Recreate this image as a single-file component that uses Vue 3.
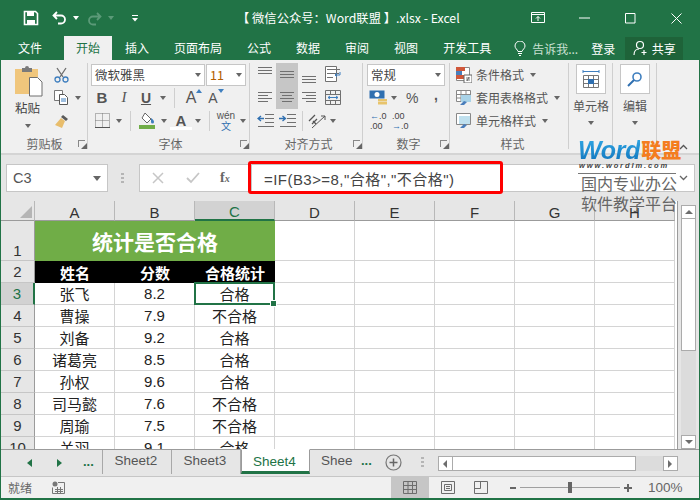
<script setup>
const tabs = ['插入', '页面布局', '公式', '数据', '审阅', '视图', '开发工具']
const cols = ['A', 'B', 'C', 'D', 'E', 'F', 'G', 'H']
const people = [
  { row: 3, name: '张飞', score: '8.2', res: '合格' },
  { row: 4, name: '曹操', score: '7.9', res: '不合格' },
  { row: 5, name: '刘备', score: '9.2', res: '合格' },
  { row: 6, name: '诸葛亮', score: '8.5', res: '合格' },
  { row: 7, name: '孙权', score: '9.6', res: '合格' },
  { row: 8, name: '司马懿', score: '7.6', res: '不合格' },
  { row: 9, name: '周瑜', score: '7.5', res: '不合格' },
  { row: 10, name: '关羽', score: '9.1', res: '合格' }
]
// 对齐按钮的线条
const alignTop = [
  { d: 'M4 4.5h14M4 7.5h14M4 10.5h14', on: false },
  { d: 'M4 8.5h14M4 11.5h14M4 14.5h14', on: true },
  { d: 'M4 13.5h14M4 16.5h14M4 19.5h14', on: false }
]
const alignBottom = [
  { d: 'M4 6.5h14M4 9.5h10M4 12.5h14M4 15.5h10', on: false },
  { d: 'M4 6.5h14M6 9.5h10M4 12.5h14M6 15.5h10', on: true },
  { d: 'M4 6.5h14M8 9.5h10M4 12.5h14M8 15.5h10', on: false }
]
</script>

<template>
  <div class="window">
    <header class="titlebar">
      <div class="qat">
        <svg class="qat-save" width="16" height="16" viewBox="0 0 16 16"><path d="M1.5 1.5h11l2 2v11h-13z" fill="none" stroke="#fff" stroke-width="1.6"/><path d="M4 2h7v4H4zM4 10h8v5H4z" fill="#fff"/></svg>
        <svg class="qat-undo" width="16" height="14" viewBox="0 0 16 14"><path d="M5 1L1.5 4.5 5 8M2 4.5h7a4 4 0 0 1 0 8H6" fill="none" stroke="#fff" stroke-width="1.8"/></svg>
        <i class="caret white"></i>
        <svg class="qat-redo" width="16" height="14" viewBox="0 0 16 14"><path d="M11 1l3.5 3.5L11 8M14 4.5H7a4 4 0 0 0 0 8h3" fill="none" stroke="#5b9a78" stroke-width="1.8"/></svg>
        <i class="caret dim"></i>
        <svg class="qat-more" width="8" height="8" viewBox="0 0 8 8"><path d="M1 1.5h6" stroke="#fff"/><path d="M1 4h6L4 7.5z" fill="#fff"/></svg>
      </div>
      <div class="doc-title">【 微信公众号：Word联盟 】.xlsx - Excel</div>
      <div class="win-btns">
        <svg width="14" height="12" viewBox="0 0 14 12"><path d="M.5 .5h13v10H.5zM.5 2.5h13M7 9V4.5M5 6.5l2-2 2 2" fill="none" stroke="#fff"/></svg>
        <svg class="btn-min" width="11" height="2" viewBox="0 0 11 2"><path d="M0 1h11" stroke="#fff"/></svg>
        <svg class="btn-max" width="11" height="11" viewBox="0 0 11 11"><path d="M.5 .5h9.5v9.5H.5z" fill="none" stroke="#fff"/></svg>
        <svg class="btn-close" width="11" height="11" viewBox="0 0 11 11"><path d="M.5 .5l10 10M10.500 .5l-10 10" stroke="#fff"/></svg>
      </div>
    </header>

    <nav class="tabbar">
      <span class="tab file">文件</span>
      <span class="tab active">开始</span>
      <span v-for="t in tabs" :key="t" class="tab">{{ t }}</span>
      <svg class="bulb" width="12" height="15" viewBox="0 0 12 15"><path d="M4 10.500C3.500 8.500 1 7.500 1 5a5 5 0 0 1 10 0c0 2.500-2.500 3.500-3 5.500zM4 12.500h4M5 14.500h2" fill="none" stroke="#fff"/></svg>
      <span class="tell">告诉我...</span>
      <span class="login">登录</span>
      <span class="share">
        <svg width="16" height="16" viewBox="0 0 16 16"><circle cx="7" cy="5" r="3.500" fill="none" stroke="#fff" stroke-width="1.200"/><path d="M1 15c0-4 2.500-6 5-6M11 10v5M8.500 12.500h5" fill="none" stroke="#fff" stroke-width="1.200"/></svg>
        共享
      </span>
    </nav>

    <section class="ribbon">
      <!-- 剪贴板 -->
      <div class="group clip">
        <div class="group-body clip-body">
          <div class="paste">
            <svg width="29" height="31" viewBox="0 0 29 31"><path d="M1 3h23v25H1z" fill="#f0c67c"/><path d="M8 2h3a2 2 0 0 1 4 0h3v4H8z" fill="#7a7a7a"/><path d="M15.500 11.500h8l4.500 4.500v14h-12.500z" fill="#fff" stroke="#6e6e6e"/></svg>
            <span class="paste-txt">粘贴</span>
            <i class="caret"></i>
          </div>
          <div class="clip-tools">
            <div class="clip-row">
              <svg width="15" height="16" viewBox="0 0 15 16"><path d="M3 1l6 9M12 1L6 10" stroke="#6d6d6d" stroke-width="1.300"/><circle cx="3.500" cy="12.500" r="2.500" fill="none" stroke="#3f7fbf" stroke-width="1.300"/><circle cx="11.500" cy="12.500" r="2.500" fill="none" stroke="#3f7fbf" stroke-width="1.300"/></svg>
            </div>
            <div class="clip-row">
              <svg width="15" height="15" viewBox="0 0 15 15"><path d="M.5 .5h8v10h-8z" fill="#fff" stroke="#777"/><path d="M5.500 4.500h5l3 3v7h-8z" fill="#fff" stroke="#555"/><path d="M7 9h5M7 11h5" stroke="#3f7fbf"/></svg>
              <i class="caret"></i>
            </div>
            <div class="clip-row">
              <svg width="16" height="16" viewBox="0 0 16 16"><path d="M9 2l5 4-2 2-5-4z" fill="#5a5a5a"/><path d="M7 5l4 3-3 7-7-3z" fill="#e8bd6c"/></svg>
            </div>
          </div>
        </div>
        <div class="group-label">剪贴板<i class="launcher"></i></div>
      </div>

      <!-- 字体 -->
      <div class="group font">
        <div class="group-body">
          <div class="row selects">
            <div class="select font-name">微软雅黑<i class="caret"></i></div>
            <div class="select font-size">11<i class="caret"></i></div>
          </div>
          <div class="row font-row2">
            <span class="cell b">B</span>
            <span class="cell it">I</span>
            <span class="cell un">U</span>
            <span class="kc"><i class="caret"></i></span>
            <i class="sep"></i>
            <span class="cell big-a">A<i class="up"></i></span>
            <span class="cell small-a">A<i class="down"></i></span>
          </div>
          <div class="row font-row3">
            <span class="cell">
              <svg width="15" height="15" viewBox="0 0 15 15"><path d="M.5 .5h14v14H.5zM7.500 .5v14M.5 7.500h14" fill="none" stroke="#777" stroke-dasharray="1 1"/><path d="M0 14.500h15" stroke="#555"/></svg>
            </span>
            <span class="kc"><i class="caret"></i></span>
            <i class="sep"></i>
            <span class="cell">
              <svg width="17" height="17" viewBox="0 0 17 17"><path d="M6 1l6 6-4 4-5-5z" fill="#fff" stroke="#666"/><path d="M12 6c2 1 3 3 3 4a1.500 1.500 0 0 1-3 0z" fill="#3f7fbf"/><path d="M0 13h16v4H0z" fill="#70ad47"/></svg>
            </span>
            <span class="kc"><i class="caret"></i></span>
            <span class="cell color-a">A</span>
            <span class="kc"><i class="caret"></i></span>
            <i class="sep"></i>
            <span class="cell wen"><b>wén</b><em>文</em></span>
            <span class="kc"><i class="caret"></i></span>
          </div>
        </div>
        <div class="group-label">字体<i class="launcher"></i></div>
      </div>

      <!-- 对齐方式 -->
      <div class="group align">
        <div class="group-body">
          <div class="row">
            <span v-for="a in alignTop" :key="a.d" class="cell" :class="{ on: a.on }">
              <svg width="22" height="23" viewBox="0 0 22 23"><path :d="a.d" stroke="#707070" fill="none"/></svg>
            </span>
            <span class="cell wrap-ic">
              <svg width="17" height="17" viewBox="0 0 17 17"><path d="M.5 .5h11v15H.5z" fill="#fff" stroke="#707070"/><path d="M2 3.500h13M2 7.500h12M2 11.500h6" stroke="#707070"/><path d="M15 6v3h-5M12 7l-2 2 2 2" fill="none" stroke="#3f7fbf"/></svg>
            </span>
          </div>
          <div class="row">
            <span v-for="a in alignBottom" :key="a.d" class="cell" :class="{ on: a.on }">
              <svg width="22" height="23" viewBox="0 0 22 23"><path :d="a.d" stroke="#707070" fill="none"/></svg>
            </span>
            <span class="cell wrap-ic">
              <svg width="16" height="15" viewBox="0 0 16 15"><path d="M.5 .5h15v14H.5zM.5 4.500h15M.5 10.500h15M5.500 .5v4M10.500 .5v4M5.500 10.500v4M10.500 10.500v4" fill="none" stroke="#707070"/><path d="M3 7.500h10M5 6l-2 1.500L5 9M11 6l2 1.500L11 9" fill="none" stroke="#3f7fbf"/></svg>
            </span>
          </div>
          <div class="row">
            <span class="cell">
              <svg width="17" height="13" viewBox="0 0 17 13"><path d="M8 .5h9M8 4.500h9M8 8.500h9M1 12.500h16" stroke="#707070"/><path d="M7 4.500H1M4 2L1 4.500 4 7" fill="none" stroke="#2f6fb0" stroke-width="1.300"/></svg>
            </span>
            <span class="cell">
              <svg width="17" height="13" viewBox="0 0 17 13"><path d="M8 .5h9M8 4.500h9M8 8.500h9M1 12.500h16" stroke="#707070"/><path d="M0 4.500h6M3.500 2L6.500 4.500 3.500 7" fill="none" stroke="#2f6fb0" stroke-width="1.300"/></svg>
            </span>
            <i class="sep orient-sep"></i>
            <span class="cell orient">
              <svg width="18" height="16" viewBox="0 0 18 16"><path d="M1 8l6-6M4 11l5-5M5 8l3 3" stroke="#555" stroke-width="1.300" fill="none"/><path d="M4 15L17 3M13 3h4v4" stroke="#555" fill="none"/></svg>
            </span>
            <span class="kc"><i class="caret"></i></span>
          </div>
        </div>
        <div class="group-label">对齐方式<i class="launcher"></i></div>
      </div>

      <!-- 数字 -->
      <div class="group number">
        <div class="group-body">
          <div class="row"><div class="select num-select">常规<i class="caret"></i></div></div>
          <div class="row num-row">
            <span class="money">
              <svg width="19" height="15" viewBox="0 0 19 15"><path d="M.5 .5h15v8H.5z" fill="#2f6fb0"/><circle cx="8" cy="4.500" r="2.500" fill="#fff"/><path d="M9 9h9v2H9zM9 11.500h9v3H9z" fill="#e8c46c"/></svg>
            </span>
            <span class="kc"><i class="caret"></i></span>
            <span class="percent">%</span>
            <span class="comma">,</span>
          </div>
          <div class="row dec-row">
            <span class="dec"><i class="blue">←</i>.0<br>.00</span>
            <span class="dec">.00<br><i class="blue">→</i>.0</span>
          </div>
        </div>
        <div class="group-label">数字<i class="launcher"></i></div>
      </div>

      <!-- 样式 -->
      <div class="group styles">
        <div class="group-body">
          <div class="row style-row">
            <svg width="16" height="16" viewBox="0 0 16 16"><path d="M.5 .5h13v13H.5z" fill="#fff" stroke="#888"/><path d="M0 0h9v4H0z" fill="#d0573a"/><path d="M0 4h6v4H0z" fill="#4a7ebb"/><path d="M0 8h8v4H0z" fill="#d0573a"/><path d="M8 8h8v8H8z" fill="#fff" stroke="#666"/><path d="M10 11h4M10 13h4M13 10l-2 4" stroke="#444" stroke-width=".7"/></svg>
            <span>条件格式</span><i class="caret"></i>
          </div>
          <div class="row style-row">
            <svg width="16" height="16" viewBox="0 0 16 16"><path d="M.5 .5h14v11H.5zM.5 4.500h14M.5 8h14M5 .5v11M10 .5v11" fill="#fff" stroke="#888"/><path d="M5 5h10v7H5z" fill="#a9d3e8"/><path d="M4 15l4-4 3 1-3 3z" fill="#4a7ebb"/></svg>
            <span>套用表格格式</span><i class="caret"></i>
          </div>
          <div class="row style-row">
            <svg width="16" height="16" viewBox="0 0 16 16"><path d="M.5 .5h14v11H.5z" fill="#fff" stroke="#888"/><path d="M3 3h11v8H3z" fill="#bfe0ee"/><path d="M4 15l4-4 3 1-3 3z" fill="#4a7ebb"/></svg>
            <span>单元格样式</span><i class="caret"></i>
          </div>
        </div>
        <div class="group-label">样式</div>
      </div>

      <!-- 单元格 / 编辑 -->
      <div class="group big-group">
        <div class="big-btn">
          <svg width="18" height="18" viewBox="0 0 18 18"><path d="M1 1.500h16M1 0v3M17 0v3M5 1.500H3M15 1.500h-2" stroke="#3f7fbf" fill="none"/><path d="M1.500 5.500h15v12h-15zM1.500 9.500h15M1.500 13.500h15M6.500 5.500v12M11.500 5.500v12" fill="#fff" stroke="#777"/><path d="M6 9h6v5H6z" fill="#2f6fb0"/></svg>
        </div>
        <span class="big-txt">单元格</span>
        <i class="caret"></i>
      </div>
      <div class="group big-group">
        <div class="big-btn">
          <svg width="16" height="16" viewBox="0 0 16 16"><circle cx="10" cy="6" r="4" fill="none" stroke="#3f7fbf" stroke-width="1.600"/><path d="M7 9l-6 6" stroke="#2f6fb0" stroke-width="2"/></svg>
        </div>
        <span class="big-txt">编辑</span>
        <i class="caret"></i>
      </div>
      <div class="group-rest">
        <svg class="collapse" width="9" height="6" viewBox="0 0 9 6"><path d="M1 5l3.500-3.500L8 5" fill="none" stroke="#555" stroke-width="1.300"/></svg>
      </div>
    </section>

    <section class="formula-bar">
      <div class="name-box">C3<i class="caret name-caret"></i></div>
      <i class="grip"></i>
      <div class="fx-box">
        <svg width="12" height="12" viewBox="0 0 12 12"><path d="M1 1l10 10M11 1L1 11" stroke="#c6c6c6" stroke-width="1.500"/></svg>
        <svg width="14" height="12" viewBox="0 0 14 12"><path d="M1 6l4 4 8-9" fill="none" stroke="#c6c6c6" stroke-width="1.800"/></svg>
        <span class="fx"><em>f</em><small>x</small></span>
      </div>
      <div class="formula-input">
        <span class="formula-text">=IF(B3&gt;=8,"合格","不合格")</span>
        <svg class="formula-caret" width="9" height="6" viewBox="0 0 9 6"><path d="M1 1l3.500 3.500L8 1" fill="none" stroke="#666" stroke-width="1.300"/></svg>
      </div>
      <div class="red-box"></div>
    </section>

    <section class="sheet">
      <div class="grid-wrap">
        <div class="grid">
          <div class="corner"><i class="corner-tri"></i></div>
          <div v-for="c in cols" :key="c" class="col-h" :class="{ sel: c === 'C' }">{{ c }}</div>

          <div class="row-h row-tall">1</div>
          <div class="title-cell">统计是否合格</div>
          <div v-for="c in 5" :key="'t' + c" class="cell-g"></div>

          <div class="row-h">2</div>
          <div class="th">姓名</div>
          <div class="th">分数</div>
          <div class="th">合格统计</div>
          <div v-for="c in 5" :key="'h' + c" class="cell-g"></div>

          <template v-for="p in people" :key="p.row">
            <div class="row-h" :class="{ sel: p.row === 3 }">{{ p.row }}</div>
            <div class="cell-g">{{ p.name }}</div>
            <div class="cell-g">{{ p.score }}</div>
            <div class="cell-g" :class="{ current: p.row === 3 }">{{ p.res }}</div>
            <div v-for="c in 5" :key="c" class="cell-g"></div>
          </template>
        </div>
      </div>
      <div class="vscroll">
        <div class="sb-btn"><i class="tri-up"></i></div>
        <div class="sb-thumb"></div>
        <div class="sb-track"></div>
        <div class="sb-btn"><i class="tri-down"></i></div>
      </div>
    </section>

    <section class="sheetbar">
      <div class="nav-btns">
        <i class="nav-l"></i>
        <i class="nav-r"></i>
        <span class="dots">...</span>
      </div>
      <span class="stab">Sheet2</span>
      <span class="stab">Sheet3</span>
      <span class="stab current-tab">Sheet4</span>
      <span class="stab cut">Shee</span>
      <span class="dots dots-r">...</span>
      <svg class="add" width="17" height="17" viewBox="0 0 17 17"><circle cx="8.500" cy="8.500" r="7.500" fill="none" stroke="#777" stroke-width="1.200"/><path d="M8.500 4.500v8M4.500 8.500h8" stroke="#666" stroke-width="1.500"/></svg>
      <i class="grip grip-s"></i>
      <div class="hscroll">
        <div class="hs-btn"><i class="tri-left"></i></div>
        <div class="hs-thumb"></div>
        <div class="hs-track"></div>
        <div class="hs-btn"><i class="tri-right"></i></div>
      </div>
    </section>

    <footer class="status">
      <span class="ready">就绪</span>
      <svg class="macro" width="13" height="13" viewBox="0 0 13 13"><circle cx="3" cy="3" r="2.500" fill="#777"/><path d="M6 1.500h6.500v11H.5V6.500M3 8.500h8M3 10.500h8M5.500 6v6M8.500 6v6" fill="none" stroke="#777"/></svg>
      <div class="status-right">
        <span class="view on-view">
          <svg width="14" height="13" viewBox="0 0 14 13"><path d="M.5 .5h13v12H.5zM.5 4.500h13M.5 8.500h13M5 .5v12M9.500 .5v12" fill="none" stroke="#6d6d6d"/></svg>
        </span>
        <span class="view">
          <svg width="14" height="13" viewBox="0 0 14 13"><path d="M.5 .5h13v12H.5zM3.500 3.500h7v6h-7zM5 5.500h4M5 7.500h4" fill="none" stroke="#6d6d6d"/></svg>
        </span>
        <span class="view view-narrow">
          <svg width="14" height="13" viewBox="0 0 14 13"><path d="M.5 .5h13v12H.5zM.5 7.500h6V.5" fill="none" stroke="#6d6d6d"/></svg>
        </span>
        <span class="zoom-minus"></span>
        <div class="slider"><i class="handle"></i></div>
        <span class="zoom-plus"></span>
        <span class="percent-txt">100%</span>
      </div>
    </footer>

    <div class="watermark">
      <div class="wm-logo"><span class="wm-word">Word</span><span class="wm-cn">联盟</span></div>
      <div class="wm-url">www.wordlm.com</div>
      <div class="wm-line">国内专业办公</div>
      <div class="wm-line wm-second">软件教学平台</div>
    </div>
  </div>
</template>

<style scoped>
.window {
  position: relative;
  width: 700px;
  height: 500px;
  box-sizing: border-box;
  border: 1px solid #217346;
  border-top: 0;
  border-bottom-width: 2px;
  background: #e6e6e6;
  overflow: hidden;
  font-family: "Noto Sans CJK SC", "Liberation Sans", sans-serif;
  font-size: 12px;
  color: #444;
}
i, em { font-style: normal; }

/* 标题栏 */
.titlebar {
  height: 36px;
  background: #217346;
  display: flex;
  align-items: center;
  color: #fff;
}
.qat { width: 239px; display: flex; align-items: center; flex: none; }
.qat-save { margin-left: 22px; }
.qat-undo { margin-left: 13px; }
.qat-redo { margin-left: 7px; margin-top: 1px; }
.caret {
  display: inline-block;
  width: 0;
  height: 0;
  border: 3px solid transparent;
  border-top: 4px solid #666;
  border-bottom: 0;
}
.caret.white { border-top-color: #fff; margin-left: 5px; }
.caret.dim { border-top-color: #5b9a78; margin-left: 6px; }
.qat-more { margin-left: 17px; }
.doc-title { width: 225px; flex: none; font-size: 12.300px; white-space: nowrap; text-indent: -3px; }
.win-btns { display: flex; align-items: center; margin-left: 66px; }
.btn-min { margin-left: 34px; }
.btn-max { margin-left: 35px; }
.btn-close { margin-left: 35px; }

/* 选项卡 */
.tabbar {
  height: 24px;
  background: #217346;
  display: flex;
  align-items: center;
  color: #fff;
  font-size: 12px;
  gap: 1px;
}
.tab { padding: 0 12px; line-height: 24px; white-space: nowrap; }
.tab.file { margin-left: 5px; margin-right: 9px; }
.tab.active { background: #f0f0f0; color: #217346; }
.bulb { margin-left: 10px; }
.tell { margin-left: 5px; color: #c9e0d3; width: 50px; white-space: nowrap; }
.login { margin-left: 8px; }
.share {
  margin-left: 9px;
  width: 58px;
  height: 23px;
  background: #1e6339;
  display: flex;
  align-items: center;
  justify-content: center;
  gap: 3px;
  box-sizing: border-box;
}

/* 功能区 */
.ribbon {
  height: 93px;
  background: #f0f0f0;
  border-bottom: 2px solid #d4d4d4;
  box-sizing: content-box;
  display: flex;
}
.group {
  display: flex;
  flex-direction: column;
  flex: none;
  position: relative;
}
.group::after {
  content: "";
  position: absolute;
  right: 0;
  top: 3px;
  bottom: 4px;
  width: 1px;
  background: #cfcfcf;
}
.group-body { height: 72px; padding-top: 3px; }
.group-label {
  height: 18px;
  line-height: 17px;
  text-align: center;
  color: #666;
  position: relative;
}
.launcher {
  position: absolute;
  right: 3px;
  top: 5px;
  width: 6px;
  height: 6px;
  border-left: 1px solid #888;
  border-top: 1px solid #888;
}
.launcher::after {
  content: "";
  position: absolute;
  right: -2px;
  bottom: -2px;
  width: 0;
  height: 0;
  border: 3px solid transparent;
  border-right-color: #666;
  border-bottom-color: #666;
}
.row { display: flex; align-items: center; height: 23px; }
.cell {
  width: 22px;
  height: 23px;
  display: flex;
  align-items: center;
  justify-content: center;
  flex: none;
}
.cell.on { background: #c6c6c6; }
.kc { width: 12px; display: flex; justify-content: center; flex: none; }
.sep { width: 1px; height: 20px; background: #cfcfcf; margin: 0 5px; flex: none; }
.select {
  height: 22px;
  box-sizing: border-box;
  background: #fff;
  border: 1px solid #c6c6c6;
  display: flex;
  align-items: center;
  justify-content: space-between;
  padding: 0 3px;
  font-size: 12.500px;
  color: #444;
}

.clip { width: 87px; }
.clip-body { display: flex; }
.paste { width: 53px; display: flex; flex-direction: column; align-items: center; }
.paste svg { margin-top: 3px; margin-left: 2px; }
.paste-txt { font-size: 12.500px; line-height: 17px; margin-top: 2px; color: #444; }
.paste .caret { margin-top: 8px; }
.clip-tools { display: flex; flex-direction: column; }
.clip-row { height: 23px; display: flex; align-items: center; gap: 6px; }

.font { width: 162px; padding-left: 3px; box-sizing: border-box; }
.font-name { width: 114px; }
.font-size { width: 40px; margin-left: 1px; color: #b35f00; }
.b { font: bold 15px "Liberation Sans", sans-serif; color: #555; }
.it { font: italic 15px "Liberation Serif", serif; color: #555; }
.un { font: bold 14px "Liberation Sans", sans-serif; color: #555; text-decoration: underline; }
.big-a { font: 16px "Liberation Sans", sans-serif; color: #555; position: relative; }
.small-a { font: 14px "Liberation Sans", sans-serif; color: #555; position: relative; }
.up, .down {
  position: absolute;
  right: 0;
  top: 3px;
  width: 0;
  height: 0;
  border: 3px solid transparent;
  border-top: 0;
  border-bottom: 4px solid #3f7fbf;
}
.down { border-bottom: 0; border-top: 4px solid #3f7fbf; }
.color-a {
  font: bold 15px "Liberation Sans", sans-serif;
  color: #555;
  background: linear-gradient(#f0f0f0 18px, #fff 18px, #fff 21px, #f0f0f0 21px);
}
.wen { flex-direction: column; line-height: 10px; }
.wen b { font: 10px "Liberation Sans", sans-serif; color: #555; }
.wen em { font-size: 10px; color: #2f6fb0; }

.align { width: 113px; padding-left: 4px; box-sizing: border-box; }
.wrap-ic { margin-left: 2px; }
.orient-sep { margin: 0 4px 0 4px; }
.orient { width: 20px; }

.number { width: 87px; padding-left: 4px; box-sizing: border-box; }
.num-select { width: 78px; }
.money { width: 19px; margin-left: 2px; display: flex; }
.percent { margin-left: 6px; font: 14px "Liberation Sans", sans-serif; color: #555; width: 28px; }
.comma { font: bold 14px "Liberation Sans", sans-serif; color: #555; margin-top: -6px; }
.dec-row { gap: 8px; padding-left: 3px; }
.dec { font: 9px/10px "Liberation Sans", sans-serif; color: #444; width: 14px; white-space: nowrap; }
.blue { color: #2f6fb0; }

.styles { width: 119px; padding-left: 6px; box-sizing: border-box; }
.style-row { gap: 3px; font-size: 12px; white-space: nowrap; color: #555; }
.style-row span { margin-left: 1px; }
.style-row .caret { margin-left: 3px; }

.big-group { width: 44px; align-items: center; }
.big-btn {
  width: 30px;
  height: 30px;
  margin-top: 4px;
  box-sizing: border-box;
  background: #fff;
  border: 1px solid #c6c6c6;
  display: flex;
  align-items: center;
  justify-content: center;
}
.big-txt { margin-top: 3px; line-height: 17px; white-space: nowrap; color: #555; }
.big-group .caret { margin-top: 7px; }
.group-rest { flex: 1; position: relative; }
.collapse { position: absolute; right: 11px; bottom: 3px; }

/* 编辑栏 */
.formula-bar {
  height: 46px;
  position: relative;
  display: flex;
  align-items: flex-start;
  padding-top: 9px;
  box-sizing: border-box;
  background: #e6e6e6;
}
.name-box {
  margin-left: 5px;
  width: 102px;
  height: 28px;
  box-sizing: border-box;
  background: #fff;
  border: 1px solid #c6c6c6;
  display: flex;
  align-items: center;
  justify-content: space-between;
  padding: 0 6px;
  font: 14.500px "Liberation Sans", sans-serif;
  color: #555;
}
.name-caret { border-width: 4px; border-top-width: 5px; border-bottom-width: 0; }
.grip {
  width: 3px;
  height: 10px;
  margin: 9px 13px 0 13px;
  background: repeating-linear-gradient(#b5b5b5 0 2px, transparent 2px 4px);
  flex: none;
}
.fx-box {
  margin-left: 2px;
  width: 110px;
  height: 28px;
  box-sizing: border-box;
  background: #fff;
  border: 1px solid #c6c6c6;
  display: flex;
  align-items: center;
  padding-left: 12px;
  gap: 22px;
}
.fx { font: italic bold 14px "Liberation Serif", serif; color: #666; margin-left: -2px; }
.fx small { font-size: 10px; }
.formula-input {
  margin-left: 2px;
  width: 444px;
  height: 28px;
  box-sizing: border-box;
  background: #fff;
  border: 1px solid #c6c6c6;
  display: flex;
  align-items: center;
  justify-content: space-between;
  padding: 0 6px 0 12px;
}
.formula-text {
  font: 15px "Liberation Sans", "Noto Sans CJK SC", sans-serif;
  letter-spacing: .45px;
  color: #444;
}
.red-box {
  position: absolute;
  left: 247px;
  top: 6px;
  width: 255px;
  height: 33px;
  box-sizing: border-box;
  border: 3px solid #f00;
  border-radius: 3px;
}

/* 表格 */
.sheet { height: 248px; display: flex; }
.grid-wrap {
  width: 676px;
  height: 248px;
  overflow: hidden;
  background: #fff;
  border-right: 1px solid #9b9b9b;
  flex: none;
  box-sizing: content-box;
}
.grid {
  display: grid;
  grid-template-columns: 34px repeat(8, 80px);
  grid-template-rows: 20px 40px;
  grid-auto-rows: 22px;
  font: 15px "Liberation Sans", "Noto Sans CJK SC", sans-serif;
  color: #222;
}
.corner { background: #e6e6e6; border-right: 1px solid #b8b8b8; border-bottom: 1px solid #9b9b9b; position: relative; }
.corner-tri {
  position: absolute;
  right: 2px;
  bottom: 2px;
  width: 0;
  height: 0;
  border-style: solid;
  border-width: 0 0 12px 12px;
  border-color: transparent transparent #b5b5b5 transparent;
}
.col-h {
  background: #e6e6e6;
  border-right: 1px solid #b8b8b8;
  border-bottom: 1px solid #9b9b9b;
  display: flex;
  align-items: center;
  justify-content: center;
  color: #333;
  padding-top: 3px;
  box-sizing: border-box;
}
.col-h.sel { background: #d2d2d2; color: #217346; border-bottom: 2px solid #217346; }
.row-h {
  background: #e6e6e6;
  border-right: 1px solid #9b9b9b;
  border-bottom: 1px solid #c6c6c6;
  display: flex;
  align-items: center;
  justify-content: center;
  color: #333;
}
.row-h.sel { background: #d2d2d2; color: #217346; border-right: 2px solid #217346; }
.row-tall { align-items: flex-end; padding-bottom: 1px; box-sizing: border-box; }
.title-cell {
  grid-column: span 3;
  background: #70ad47;
  color: #fff;
  font-weight: 700;
  font-size: 21px;
  display: flex;
  align-items: center;
  justify-content: center;
  border-bottom: 1px solid #70ad47;
}
.th {
  background: #000;
  color: #fff;
  font-weight: 700;
  display: flex;
  align-items: center;
  justify-content: center;
}
.cell-g {
  border-right: 1px solid #d4d4d4;
  border-bottom: 1px solid #d4d4d4;
  display: flex;
  align-items: center;
  justify-content: center;
  white-space: nowrap;
}
.cell-g.current { position: relative; border-color: transparent; }
.cell-g.current::before {
  content: "";
  position: absolute;
  inset: -1px;
  border: 2px solid #217346;
}
.cell-g.current::after {
  content: "";
  position: absolute;
  right: -3px;
  bottom: -3px;
  width: 5px;
  height: 5px;
  background: #217346;
  border: 1px solid #fff;
}
.vscroll {
  margin-left: 3px;
  width: 15px;
  display: flex;
  flex-direction: column;
  padding-top: 4px;
  box-sizing: content-box;
}
.sb-btn {
  height: 14px;
  box-sizing: border-box;
  background: #fff;
  border: 1px solid #ababab;
  display: flex;
  align-items: center;
  justify-content: center;
}
.sb-thumb { height: 132px; background: #fff; border: 1px solid #ababab; border-top: 0; box-sizing: border-box; }
.sb-track { flex: 1; background: #dcdcdc; }
.tri-up, .tri-down {
  width: 0;
  height: 0;
  border: 4px solid transparent;
  border-top: 0;
  border-bottom: 4px solid #6d6d6d;
}
.tri-down { border-bottom: 0; border-top: 4px solid #6d6d6d; }

/* 工作表标签 */
.sheetbar {
  height: 28px;
  border-top: 1px solid #9b9b9b;
  box-sizing: border-box;
  background: #e6e6e6;
  display: flex;
  align-items: flex-start;
  font: 13.500px "Liberation Sans", sans-serif;
  color: #555;
  border-bottom: 1px solid #c6c6c6;
}
.nav-btns { width: 101px; display: flex; align-items: center; height: 24px; flex: none; border-right: 1px solid #a8a8a8; }
.nav-l, .nav-r { width: 0; height: 0; border: 4px solid transparent; margin-top: 1px; }
.nav-l { border-left: 0; border-right: 5px solid #217346; margin-left: 26px; }
.nav-r { border-right: 0; border-left: 5px solid #217346; margin-left: 25px; }
.dots { color: #217346; font-weight: 700; margin-left: 21px; font-size: 13px; line-height: 22px; }
.stab {
  width: 69px;
  height: 24px;
  line-height: 22px;
  text-align: center;
  padding-right: 2px;
  border-right: 1px solid #a8a8a8;
  flex: none;
  box-sizing: border-box;
}
.current-tab {
  background: #fff;
  color: #217346;
  border-right: 1px solid #9b9b9b;
  border-left: 1px solid #9b9b9b;
  border-bottom: 3px solid #217346;
  height: 25px;
  margin-top: -1px;
  padding-top: 1px;
  border-top: 1px solid #fff;
}
.stab.cut { border: 0; width: 46px; text-align: left; padding: 0 0 0 11px; overflow: hidden; }
.dots-r { margin-left: 5px; }
.add { margin-left: 13px; margin-top: 4px; flex: none; }
.grip-s { margin: 7px 13px 0 19px; }
.hscroll { display: flex; height: 15px; margin-top: 6px; width: 240px; margin-left: 1px; flex: none; }
.hs-btn {
  width: 15px;
  box-sizing: border-box;
  background: #fff;
  border: 1px solid #ababab;
  display: flex;
  align-items: center;
  justify-content: center;
}
.hs-thumb { width: 183px; background: #fff; border: 1px solid #ababab; border-left: 0; box-sizing: border-box; }
.hs-track { flex: 1; background: #dcdcdc; }
.tri-left, .tri-right { width: 0; height: 0; border: 4px solid transparent; }
.tri-left { border-left: 0; border-right: 4px solid #6d6d6d; }
.tri-right { border-right: 0; border-left: 4px solid #6d6d6d; }

/* 状态栏 */
.status {
  height: 21px;
  background: #f0f0f0;
  display: flex;
  align-items: center;
  color: #666;
}
.ready { margin-left: 7px; }
.macro { margin-left: 20px; }
.status-right { margin-left: auto; display: flex; align-items: center; height: 21px; }
.view { width: 38px; height: 21px; display: flex; align-items: center; justify-content: center; }
.view-narrow { width: 28px; }
.on-view { background: #c6c6c6; }
.zoom-minus { width: 6px; height: 2px; background: #666; margin-left: 15px; }
.slider { width: 100px; height: 1px; background: #a0a0a0; margin-left: 4px; position: relative; }
.handle { position: absolute; left: 48px; top: -5px; width: 4px; height: 11px; background: #666; }
.zoom-plus {
  width: 8px;
  height: 2px;
  background: #666;
  margin-left: 4px;
  position: relative;
}
.zoom-plus::after { content: ""; position: absolute; left: 3px; top: -3px; width: 2px; height: 8px; background: #666; }
.percent-txt { width: 32px; margin-left: 16px; margin-right: 19px; font: 13.500px "Liberation Sans", sans-serif; color: #666; }

/* 水印 */
.watermark {
  position: absolute;
  left: 577px;
  top: 139px;
  width: 106px;
}
.wm-logo { display: flex; align-items: center; height: 22px; white-space: nowrap; }
.wm-word {
  font: italic bold 25px "Liberation Sans", sans-serif;
  letter-spacing: -.3px;
  background: linear-gradient(#34ace8, #0d6fb8);
  -webkit-background-clip: text;
  background-clip: text;
  color: transparent;
}
.wm-cn { font-size: 20px; font-weight: 900; color: #f47d20; line-height: 22px; margin-left: 1px; }
.wm-url {
  font: italic bold 7.500px "Liberation Sans", sans-serif;
  letter-spacing: 1.900px;
  color: #444;
  line-height: 10px;
  padding-left: 1px;
  padding-bottom: 2px;
  border-bottom: 1px solid #777;
  width: 97px;
  white-space: nowrap;
}
.wm-line { font-size: 16px; line-height: 20px; color: #666; margin-top: -1px; padding-left: 3px; white-space: nowrap; }
.wm-second { margin-top: 0; }
</style>

<style>
html, body { margin: 0; padding: 0; }
</style>
